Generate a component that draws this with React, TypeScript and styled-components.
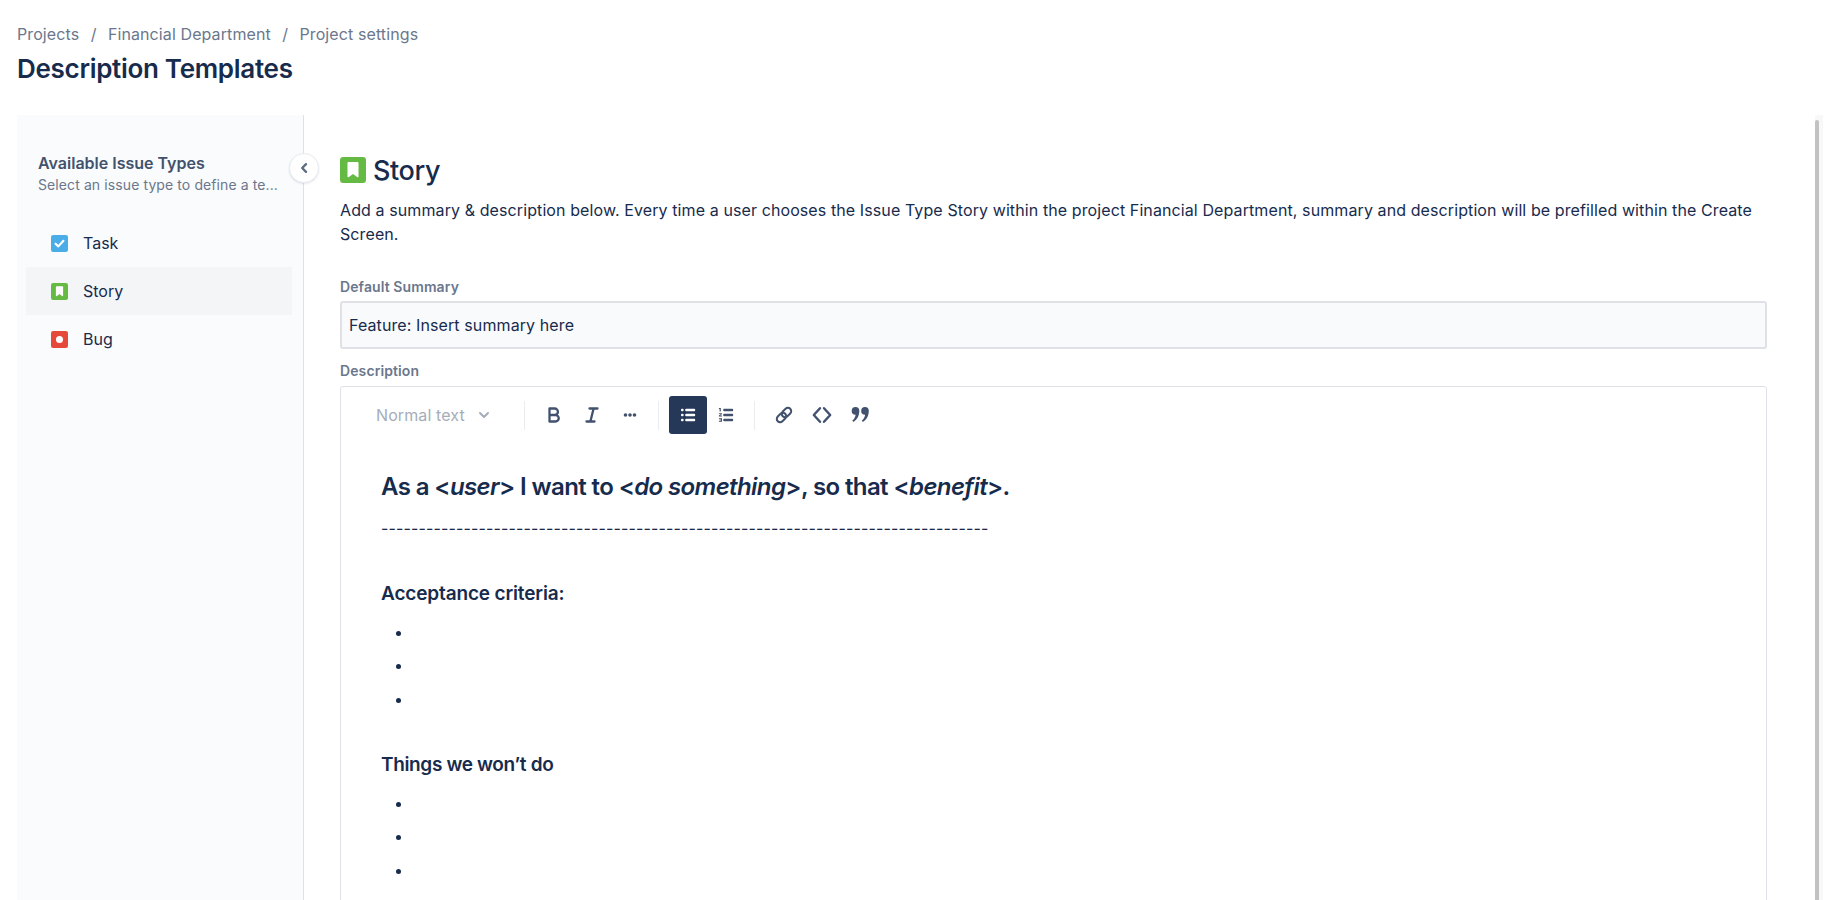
import React from "react";
import styled, { createGlobalStyle } from "styled-components";

const Global = createGlobalStyle`
  html, body { margin: 0; padding: 0; height: 100%; background: #fff; overflow: hidden; }
  body { font-family: Inter, "Noto Sans", sans-serif; color: #172b4d; letter-spacing: 0.1px; }
`;

const Page = styled.div`
  height: 900px;
  padding: 24px 17px 0;
  box-sizing: border-box;
  display: flex;
  flex-direction: column;
  overflow: hidden;
`;
const Crumbs = styled.nav`
  display: flex;
  align-items: center;
  height: 20px;
  font-size: 16px;
  color: #6b778c;
`;
const CrumbSep = styled.span`
  padding: 0 11.4px;
`;
const Title = styled.h1`
  margin: 7px 0 0;
  font-size: 26px;
  line-height: 36px;
  font-weight: 600;
  letter-spacing: -0.3px;
  color: #172b4d;
`;
const Body = styled.div`
  margin-top: 28px;
  flex: 1;
  min-height: 0;
  display: flex;
`;
const Side = styled.aside`
  position: relative;
  width: 287px;
  flex: none;
  box-sizing: border-box;
  background: #fafbfc;
  border-right: 1px solid #dfe1e6;
  padding: 38px 11px 0 9px;
`;
const SideHead = styled.div`
  padding: 0 12px;
  margin-bottom: 24px;
`;
const SideTitle = styled.div`
  font-size: 16px;
  line-height: 20px;
  font-weight: 600;
  letter-spacing: 0;
  color: #42526e;
`;
const SideSub = styled.div`
  margin-top: 2px;
  font-size: 14px;
  line-height: 20px;
  color: #6b778c;
  white-space: nowrap;
`;
const Item = styled.div<{ $active?: boolean }>`
  height: 48px;
  display: flex;
  align-items: center;
  gap: 15px;
  padding-left: 25px;
  font-size: 16px;
  letter-spacing: 0;
  color: #172b4d;
  background: ${(p) => (p.$active ? "#f4f5f7" : "transparent")};
`;
const Collapse = styled.button`
  position: absolute;
  top: 38px;
  right: -16px;
  width: 30px;
  height: 30px;
  padding: 0;
  border: 1px solid #ebecf0;
  border-radius: 50%;
  background: #fff;
  box-shadow: 0 1px 2px rgba(9, 30, 66, 0.12);
  color: #5e6c84;
  display: flex;
  align-items: center;
  justify-content: center;
`;
const Main = styled.main`
  flex: 1;
  min-width: 0;
  display: flex;
`;
const Content = styled.div`
  flex: 1;
  min-width: 0;
  padding: 37px 48px 0 36px;
`;
const Heading = styled.div`
  display: flex;
  align-items: center;
  gap: 7px;
  height: 36px;
  font-size: 27px;
  font-weight: 500;
  letter-spacing: -0.4px;
`;
const Lead = styled.p`
  margin: 10px 0 0;
  font-size: 16px;
  line-height: 24px;
  color: #172b4d;
`;
const Label = styled.div`
  font-size: 14px;
  line-height: 16px;
  font-weight: 600;
  color: #6b778c;
`;
const SummaryLabel = styled(Label)`
  margin-top: 33px;
`;
const DescLabel = styled(Label)`
  margin-top: 14px;
`;
const Summary = styled.div`
  margin-top: 6px;
  height: 48px;
  box-sizing: border-box;
  border: 2px solid #dfe1e6;
  border-radius: 3px;
  background: #f9fafc;
  padding: 0 7px;
  display: flex;
  align-items: center;
  font-size: 16px;
`;
const Editor = styled.div`
  margin-top: 7px;
  height: 600px;
  box-sizing: border-box;
  border: 1px solid #dfe1e6;
  border-radius: 3px 3px 0 0;
`;
const Toolbar = styled.div`
  height: 38px;
  margin-top: 9px;
  display: flex;
  align-items: center;
  padding-left: 35px;
  color: #42526e;
`;
const StyleSelect = styled.div`
  display: flex;
  align-items: center;
  gap: 13px;
  width: 148px;
  font-size: 16px;
  color: #a5adba;
`;
const Sep = styled.span<{ $before?: number }>`
  width: 1px;
  height: 29px;
  background: #ebecf0;
  margin: 0 10px 0 ${(p) => p.$before ?? 0}px;
`;
const Tool = styled.span<{ $active?: boolean }>`
  width: 38px;
  height: 38px;
  border-radius: 3px;
  display: flex;
  align-items: center;
  justify-content: center;
  background: ${(p) => (p.$active ? "#253858" : "transparent")};
  color: ${(p) => (p.$active ? "#fff" : "#42526e")};
`;
const Doc = styled.div`
  padding: 35px 0 0 40px;
`;
const H1 = styled.div`
  font-size: 24px;
  line-height: 36px;
  font-weight: 600;
  letter-spacing: -0.6px;
`;
const Dashes = styled.div`
  margin-top: 11px;
  font-size: 16px;
  line-height: 24px;
  letter-spacing: 0.14px;
`;
const H2 = styled.div<{ $top: number; $track: number }>`
  margin-top: ${(p) => p.$top}px;
  font-size: 19px;
  line-height: 28px;
  font-weight: 600;
  letter-spacing: ${(p) => p.$track}px;
`;
const Bullets = styled.ul`
  margin: 7.5px 0 0;
  padding: 0 0 0 32px;
`;
const Bullet = styled.li`
  height: 33.5px;
  font-size: 16px;
  line-height: 33.5px;
`;
const ScrollTrack = styled.div`
  width: 8px;
  flex: none;
  box-sizing: border-box;
  background: #f8f8f8;
  padding: 5px 4px 0 0;
`;
const ScrollThumb = styled.div`
  height: 100%;
  background: #c2c2c2;
  border-radius: 3px 3px 0 0;
`;

const TaskIcon = ({ s = 17 }: { s?: number }) => (
  <svg width={s} height={s} viewBox="0 0 16 16">
    <rect width="16" height="16" rx="2" fill="#4bade8" />
    <path d="M4.3 8.2l2.6 2.5 4.8-5.2" fill="none" stroke="#fff" strokeWidth="2" strokeLinecap="round" strokeLinejoin="round" />
  </svg>
);
const StoryIcon = ({ s = 17 }: { s?: number }) => (
  <svg width={s} height={s} viewBox="0 0 16 16">
    <rect width="16" height="16" rx="2" fill="#65ba43" />
    <path d="M4.6 3.8c0-.4.3-.7.7-.7h5.4c.4 0 .7.3.7.7v8.2c0 .4-.4.6-.7.4L8 10.4l-2.7 2c-.3.2-.7 0-.7-.4z" fill="#fff" />
  </svg>
);
const BugIcon = ({ s = 17 }: { s?: number }) => (
  <svg width={s} height={s} viewBox="0 0 16 16">
    <rect width="16" height="16" rx="2" fill="#e5493a" />
    <circle cx="8" cy="8" r="3.3" fill="#fff" />
  </svg>
);
const Chevron = () => (
  <svg width="10" height="12" viewBox="0 0 10 12">
    <path d="M7 2.2L3.2 6 7 9.8" fill="none" stroke="currentColor" strokeWidth="2.4" strokeLinecap="round" strokeLinejoin="round" />
  </svg>
);
const Caret = () => (
  <svg width="12" height="8" viewBox="0 0 12 8">
    <path d="M2 2l4 4 4-4" fill="none" stroke="#a5adba" strokeWidth="2" strokeLinecap="round" strokeLinejoin="round" />
  </svg>
);
const I = ({ children, w = 2.3 }: { children: React.ReactNode; w?: number }) => (
  <svg width="24" height="24" viewBox="0 0 24 24" fill="none" stroke="currentColor" strokeWidth={w} strokeLinecap="round" strokeLinejoin="round">
    {children}
  </svg>
);
const IconBold = () => (
  <I>
    <path d="M7.5 5.5h5.2a3.2 3.2 0 0 1 0 6.5H7.5zM7.5 12h6a3.25 3.25 0 0 1 0 6.5h-6z" />
  </I>
);
const IconItalic = () => (
  <I>
    <path d="M9.5 5.5h8M6.5 18.5h8M13.6 5.5l-3.2 13" />
  </I>
);
const IconMore = () => (
  <svg width="24" height="24" viewBox="0 0 24 24" fill="currentColor">
    <circle cx="7.5" cy="12" r="1.8" />
    <circle cx="12" cy="12" r="1.8" />
    <circle cx="16.5" cy="12" r="1.8" />
  </svg>
);
const Lines = () => (
  <>
    <rect x="9.2" y="5.8" width="10" height="2.4" rx="1" />
    <rect x="9.2" y="10.8" width="10" height="2.4" rx="1" />
    <rect x="9.2" y="15.8" width="10" height="2.4" rx="1" />
  </>
);
const IconBullets = () => (
  <svg width="24" height="24" viewBox="0 0 24 24" fill="currentColor">
    <rect x="5" y="5.8" width="2.6" height="2.4" rx="1" />
    <rect x="5" y="10.8" width="2.6" height="2.4" rx="1" />
    <rect x="5" y="15.8" width="2.6" height="2.4" rx="1" />
    <Lines />
  </svg>
);
const IconNumbers = () => (
  <svg width="24" height="24" viewBox="0 0 24 24" fill="currentColor">
    <path d="M5.6 5h1.2v3.6H5.6zM4.9 5h1v1h-1z" />
    <path d="M4.9 10.2H8v.9l-1.9 1.4H8v.9H4.9v-.9L6.8 11.1H4.9z" />
    <path d="M4.9 15.2H8v3.6H4.9v-.9h2v-.5H5.4v-.8h1.5v-.5h-2z" />
    <Lines />
  </svg>
);
const IconLink = () => (
  <I w={2}>
    <rect x="4.2" y="11.2" width="10.6" height="6.6" rx="3.3" transform="rotate(-45 9.5 14.5)" />
    <rect x="9.2" y="6.2" width="10.6" height="6.6" rx="3.3" transform="rotate(-45 14.5 9.5)" />
  </I>
);
const IconCode = () => (
  <I w={2.4}>
    <path d="M10 5.2L3.8 12l6.2 6.8M14 5.2l6.2 6.8-6.2 6.8" />
  </I>
);
const IconQuote = () => (
  <svg width="24" height="24" viewBox="0 0 24 24" fill="currentColor">
    <path d="M7.5 4a3.8 3.8 0 0 1 3.8 3.8c0 5-2.2 9.2-6 11.2l-1-1.6c1.9-1.3 3-3 3.3-5.7A3.8 3.8 0 1 1 7.5 4z" />
    <path d="M17 4a3.8 3.8 0 0 1 3.8 3.8c0 5-2.2 9.2-6 11.2l-1-1.6c1.9-1.3 3-3 3.3-5.7A3.8 3.8 0 1 1 17 4z" />
  </svg>
);

export default function App() {
  return (
    <Page>
      <Global />
      <Crumbs>
        <span>Projects</span>
        <CrumbSep>/</CrumbSep>
        <span>Financial Department</span>
        <CrumbSep>/</CrumbSep>
        <span>Project settings</span>
      </Crumbs>
      <Title>Description Templates</Title>
      <Body>
        <Side>
          <SideHead>
            <SideTitle>Available Issue Types</SideTitle>
            <SideSub>Select an issue type to define a te...</SideSub>
          </SideHead>
          <Item>
            <TaskIcon />
            Task
          </Item>
          <Item $active>
            <StoryIcon />
            Story
          </Item>
          <Item>
            <BugIcon />
            Bug
          </Item>
          <Collapse aria-label="Collapse">
            <Chevron />
          </Collapse>
        </Side>
        <Main>
          <Content>
            <Heading>
              <StoryIcon s={26} />
              Story
            </Heading>
            <Lead>
              Add a summary &amp; description below. Every time a user chooses the Issue Type Story within the project
              Financial Department, summary and description will be prefilled within the Create Screen.
            </Lead>
            <SummaryLabel>Default Summary</SummaryLabel>
            <Summary>Feature: Insert summary here</Summary>
            <DescLabel>Description</DescLabel>
            <Editor>
              <Toolbar>
                <StyleSelect>
                  Normal text
                  <Caret />
                </StyleSelect>
                <Sep />
                <Tool><IconBold /></Tool>
                <Tool><IconItalic /></Tool>
                <Tool><IconMore /></Tool>
                <Sep $before={9} />
                <Tool $active><IconBullets /></Tool>
                <Tool><IconNumbers /></Tool>
                <Sep $before={9} />
                <Tool><IconLink /></Tool>
                <Tool><IconCode /></Tool>
                <Tool><IconQuote /></Tool>
              </Toolbar>
              <Doc>
                <H1>
                  As a &lt;<em>user</em>&gt; I want to &lt;<em>do something</em>&gt;, so that &lt;<em>benefit</em>&gt;.
                </H1>
                <Dashes>{"-".repeat(81)}</Dashes>
                <H2 $top={40} $track={-0.15}>Acceptance criteria:</H2>
                <Bullets>
                  <Bullet />
                  <Bullet />
                  <Bullet />
                </Bullets>
                <H2 $top={35} $track={-0.35}>Things we won’t do</H2>
                <Bullets>
                  <Bullet />
                  <Bullet />
                  <Bullet />
                </Bullets>
              </Doc>
            </Editor>
          </Content>
          <ScrollTrack>
            <ScrollThumb />
          </ScrollTrack>
        </Main>
      </Body>
    </Page>
  );
}
